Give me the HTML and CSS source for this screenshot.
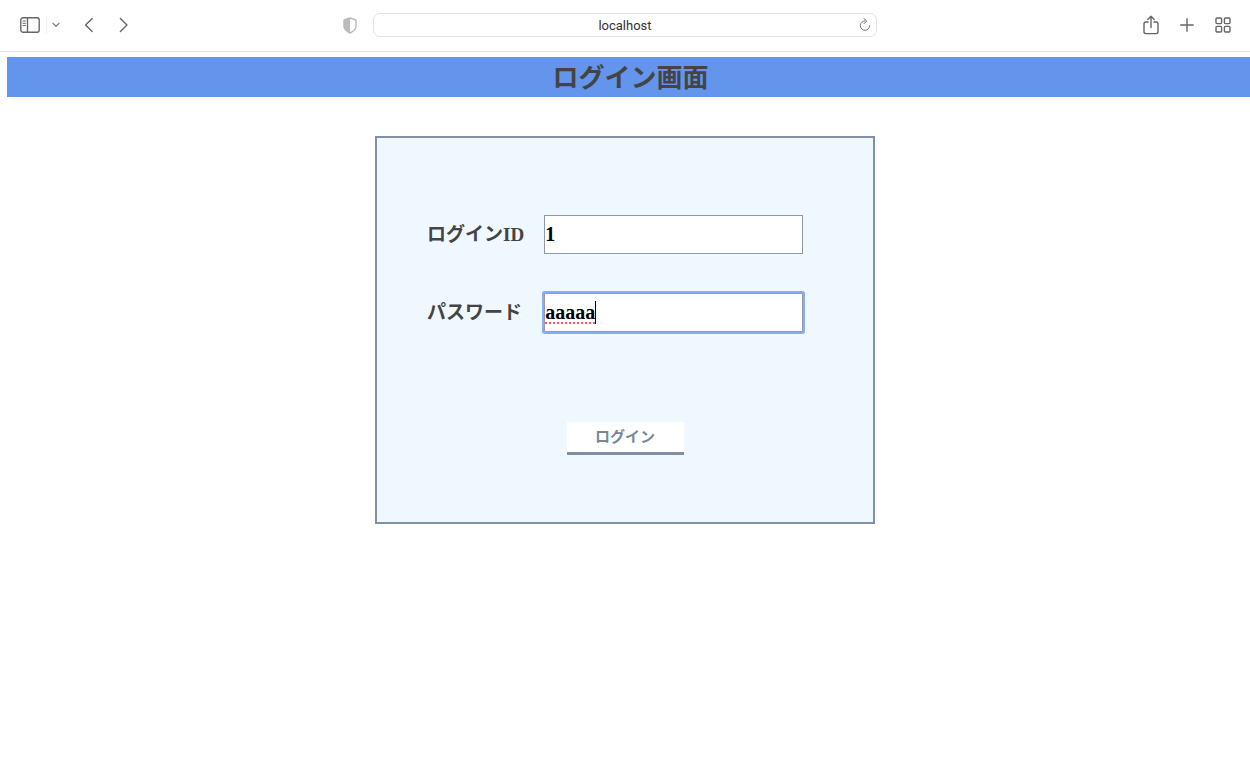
FILE: index.html
```html
<!DOCTYPE html>
<html lang="ja">
<head>
    <meta charset="UTF-8">
    <meta name="viewport" content="width=device-width, initial-scale=1.0">
    <title>ログイン画面</title>
    <link rel="stylesheet" href="styles.css">
</head>
<body>
    <header class="toolbar">
        <div class="tools tools-left">
            <button type="button" class="tool" aria-label="サイドバー">
                <svg width="20" height="16" viewBox="0 0 20 16"><rect x="0.8" y="0.8" width="18.4" height="14.4" rx="2.2"/><path d="M7.5 1v14"/><path class="thin" d="M3 4h2.4M3 6.3h2.4M3 8.6h2.4"/></svg>
            </button>
            <span class="divider"></span>
            <button type="button" class="tool chevron" aria-label="タブグループ">
                <svg width="8" height="6" viewBox="0 0 8 6"><path d="M1 1.3l3 3 3-3"/></svg>
            </button>
            <button type="button" class="tool back" aria-label="戻る">
                <svg width="10" height="16" viewBox="0 0 10 16"><path d="M8.2 1.4L1.6 8l6.6 6.6"/></svg>
            </button>
            <button type="button" class="tool forward" aria-label="進む">
                <svg width="10" height="16" viewBox="0 0 10 16"><path d="M1.4 1.4L8 8l-6.6 6.6"/></svg>
            </button>
            <button type="button" class="tool shield" aria-label="プライバシーレポート">
                <svg width="14" height="17" viewBox="0 0 14 17"><path d="M7 1l6 2v6.2c0 3-2.8 5.2-6 6.8-3.2-1.6-6-3.8-6-6.8V3z"/><path class="fill" d="M7 1L1 3v6.2c0 3 2.8 5.2 6 6.8z"/></svg>
            </button>
        </div>
        <div class="address">
            <input type="text" class="address-input" value="localhost" aria-label="アドレス">
            <button type="button" class="tool reload" aria-label="再読み込み">
                <svg width="12" height="14" viewBox="0 0 12 14"><path d="M6 2.9a4.7 4.7 0 1 0 4.7 4.7"/><path d="M5 0.6l2.7 2.4L5.2 5.6"/></svg>
            </button>
        </div>
        <div class="tools tools-right">
            <button type="button" class="tool" aria-label="共有">
                <svg width="16" height="20" viewBox="0 0 16 20"><path d="M5 7H2.8Q1 7 1 8.8v8Q1 18.6 2.8 18.6h10.4q1.8 0 1.8-1.8v-8Q15 7 13.2 7H11"/><path d="M8 12.5V1.4M4.8 4.5L8 1.3l3.2 3.2"/></svg>
            </button>
            <button type="button" class="tool" aria-label="新規タブ">
                <svg width="14" height="14" viewBox="0 0 14 14"><path d="M7 0.7v12.6M0.7 7h12.6"/></svg>
            </button>
            <button type="button" class="tool" aria-label="タブの概要">
                <svg width="16" height="16" viewBox="0 0 16 16"><rect x="1" y="1" width="5.6" height="5.6" rx="1"/><rect x="9.4" y="1" width="5.6" height="5.6" rx="1"/><rect x="1" y="9.4" width="5.6" height="5.6" rx="1"/><rect x="9.4" y="9.4" width="5.6" height="5.6" rx="1"/></svg>
            </button>
        </div>
    </header>

    <main>
        <h1 class="title">ログイン画面</h1>
        <form class="login">
            <div class="fields">
                <label for="login-id">ログインID</label>
                <input type="text" id="login-id" class="field" value="1">
                <label for="password">パスワード</label>
                <div class="active">
                    <input type="text" id="password" class="field" value="aaaaa">
                    <span class="mark">aaaaa</span>
                </div>
            </div>
            <button type="button" class="submit">ログイン</button>
        </form>
    </main>
</body>
</html>
```

FILE: styles.css
```css
* {
    box-sizing: border-box;
}
body {
    margin: 0;
    background-color: #fff;
    color: #444;
    font-family: "Liberation Serif", "Noto Sans CJK JP", serif;
}

/* browser bar */
.toolbar {
    display: grid;
    grid-template-columns: 1fr minmax(200px, 504px) 1fr;
    align-items: center;
    height: 52px;
    padding-bottom: 1px;
    border-bottom: 1px solid #e4e4e4;
}
.tools {
    display: flex;
    align-items: center;
}
.tools-left {
    padding: 0 16px 0 20px;
}
.tools-right {
    justify-content: flex-end;
    gap: 21px;
    padding-right: 19px;
}
.tool {
    display: flex;
    padding: 0;
    border: 0;
    background: none;
}
.tool svg {
    fill: none;
    stroke: #666;
    stroke-width: 1.4;
    stroke-linecap: round;
    stroke-linejoin: round;
}
.tool .thin {
    stroke-width: 1;
}
.chevron svg {
    stroke: #888;
}
.divider {
    width: 1px;
    height: 18px;
    margin: 0 5px 0 6px;
    background-color: #eee;
}
.back {
    margin-left: 24px;
}
.forward {
    margin-left: 25px;
}
.shield {
    margin-left: auto;
}
.shield svg {
    stroke: #bbb;
}
.shield .fill {
    fill: #bbb;
    stroke: none;
}
.address {
    display: flex;
    align-items: center;
    height: 24px;
    padding: 0 5px;
    border: 1px solid #e2e2e2;
    border-radius: 7px;
}
.address-input {
    flex: 1;
    min-width: 0;
    padding: 0 0 0 12px;
    border: 0;
    outline: none;
    background: none;
    color: #333;
    font: 13px Roboto, sans-serif;
    text-align: center;
}
.reload svg {
    stroke: #777;
    stroke-width: 1;
}

/* login page */
.title {
    margin: 5px 0 0 7px;
    padding: 4px 0 0 4px;
    background-color: cornflowerblue;
    font-size: 26px;
    line-height: 36px;
    text-align: center;
}
.login {
    width: 40%;
    min-width: 500px;
    margin: 39px auto 0;
    padding: 77px 50px 67px;
    border: 2px solid #8090a6;
    background-color: aliceblue;
}
.fields {
    display: grid;
    grid-template-columns: auto 1fr;
    gap: 39px 20px;
    align-items: center;
    margin-right: 20px;
    font-size: 19px;
    font-weight: bold;
}
.fields label {
    padding-bottom: 4px;
}
.field {
    display: block;
    width: 100%;
    height: 39px;
    padding: 0;
    border: 1px solid #8d99a8;
    background-color: #fff;
    color: #000;
    font: bold 20px "Liberation Serif", "Noto Sans CJK JP", serif;
}
.active {
    position: relative;
}
.active .field {
    border-color: #99a;
    outline: none;
    box-shadow: 0 0 0 2px #85adf7;
    border-radius: 1px;
}
/* spelling underline and caret over the typed text */
.mark {
    position: absolute;
    top: 8px;
    left: 1px;
    height: 23px;
    border-right: 1px solid #000;
    color: transparent;
    font-size: 20px;
    line-height: 23px;
    pointer-events: none;
    text-decoration: underline dotted #f55 2px;
    text-underline-offset: 3px;
}
.submit {
    display: block;
    width: 117px;
    height: 33px;
    margin: 90px auto 0;
    padding: 0 0 4px;
    border: 0;
    border-bottom: 3px solid #8090a0;
    background-color: #fff;
    color: #778899;
    font: bold 15px "Liberation Serif", "Noto Sans CJK JP", serif;
}
```
